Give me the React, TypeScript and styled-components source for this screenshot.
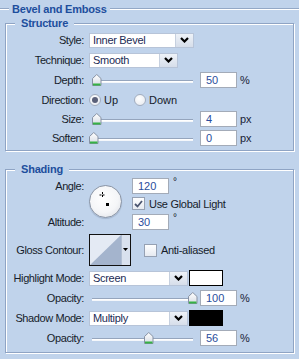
import * as React from 'react'
import styled, { createGlobalStyle } from 'styled-components'

const GlobalStyle = createGlobalStyle`
	html, body {
		margin: 0;
		padding: 0;
		background: #c0d3eb;
	}
	body {
		font-family: 'Liberation Sans', Arial, sans-serif;
		font-size: 11px;
		color: #161c2a;
	}
`

const Panel = styled.div`
	width: 299px;
	height: 359px;
	box-sizing: border-box;
	background: #c0d3eb;
	overflow: hidden;
`

const TitleRow = styled.div`
	display: flex;
	align-items: center;
	height: 17px;
`

const Rule = styled.div<{ $w?: number }>`
	height: 0;
	border-top: 1px solid #93a8c6;
	border-bottom: 1px solid #fff;
	flex: ${(p) => (p.$w ? `0 0 ${p.$w}px` : '1 1 0')};
`

const Title = styled.div`
	font-weight: bold;
	color: #1d4e9d;
	padding: 0 3px;
	letter-spacing: -0.2px;
	white-space: nowrap;
`

const Group = styled.div<{ $top: number; $bottom: number }>`
	margin: ${(p) => p.$top}px 5px 0 5px;
	border: 1px solid #8fa4c4;
	box-shadow: inset 1px 1px 0 #fff, 1px 1px 0 #fff;
	padding-bottom: ${(p) => p.$bottom}px;
`

const Legend = styled.div`
	margin: -7px 0 0 9px;
	width: fit-content;
	padding: 0 6px;
	background: #c0d3eb;
	font-weight: bold;
	color: #1d4e9d;
	line-height: 13px;
	letter-spacing: -0.2px;
`

const Row = styled.div<{ $h: number; $mt?: number }>`
	display: flex;
	align-items: center;
	height: ${(p) => p.$h}px;
	margin-top: ${(p) => p.$mt || 0}px;
`

const Label = styled.div`
	flex: 0 0 78px;
	margin-right: 5px;
	text-align: right;
	white-space: nowrap;
	letter-spacing: -0.4px;
`

const SelectBox = styled.div<{ $w: number }>`
	width: ${(p) => p.$w}px;
	height: 15px;
	box-sizing: border-box;
	display: flex;
	border: 1px solid #b7c4d8;
	background: #fff;
`

const SelectText = styled.div`
	flex: 1;
	padding-left: 3px;
	line-height: 13px;
	color: #1b2b55;
	letter-spacing: -0.3px;
	white-space: nowrap;
`

const SelectButton = styled.div`
	width: 17px;
	background: linear-gradient(#eef2f8, #d6deea);
	border-left: 1px solid #c6d0df;
	display: flex;
	align-items: center;
	justify-content: center;
`

const NumBox = styled.div`
	width: 37px;
	height: 16px;
	box-sizing: border-box;
	border: 1px solid #a3abb8;
	background: #fff;
	color: #2a4d9c;
	padding-left: 5px;
	line-height: 14px;
`

const Unit = styled.span`
	margin-left: 3px;
	color: #1a2235;
`

const Degree = styled.span`
	margin-left: 4px;
	align-self: flex-start;
	font-size: 10px;
	line-height: 10px;
	margin-top: 1px;
`

const SliderWrap = styled.div`
	position: relative;
	width: 108px;
	height: 14px;
	margin-right: 3px;
`

const Track = styled.div`
	position: absolute;
	left: 3px;
	right: 4px;
	top: 7px;
	height: 1px;
	background: #95a5bd;
	box-shadow: 0 1px 0 #fff, 0 2px 0 #f4f7fb;
`

const Thumb = styled.svg`
	position: absolute;
	top: 1px;
`

const RadioOption = styled.div<{ $mr?: number }>`
	display: flex;
	align-items: center;
	gap: 3px;
	margin-right: ${(p) => p.$mr || 0}px;
`

const RadioCircle = styled.span<{ $on?: boolean }>`
	width: 12px;
	height: 12px;
	box-sizing: border-box;
	border-radius: 50%;
	border: 1px solid #a2adbe;
	background: radial-gradient(circle at 40% 35%, #ffffff, #e3e7ee);
	display: inline-flex;
	align-items: center;
	justify-content: center;
	&::after {
		content: '';
		width: 6px;
		height: 6px;
		border-radius: 50%;
		background: ${(p) => (p.$on ? '#5a6079' : 'transparent')};
	}
`

const CheckOption = styled.div<{ $ml?: number }>`
	display: flex;
	align-items: center;
	gap: 4px;
	margin-left: ${(p) => p.$ml || 0}px;
	white-space: nowrap;
	letter-spacing: -0.3px;
`

const CheckBox = styled.span`
	width: 13px;
	height: 13px;
	box-sizing: border-box;
	border: 1px solid #96a1b3;
	background: linear-gradient(#ffffff, #e6eaf1);
	display: inline-flex;
	align-items: center;
	justify-content: center;
`

const AngleGrid = styled.div`
	display: grid;
	grid-template-columns: 83px 43px auto;
	grid-template-rows: 19px 17px 19px;
`

const GridLabel = styled(Label)<{ $row: number }>`
	grid-column: 1;
	grid-row: ${(p) => p.$row};
	align-self: center;
`

const GridCell = styled.div<{ $row: number }>`
	grid-column: 3;
	grid-row: ${(p) => p.$row};
	display: flex;
	align-items: center;
`

const Dial = styled.div`
	grid-column: 2;
	grid-row: 1 / 4;
	align-self: start;
	margin-top: 9px;
	width: 33px;
	height: 33px;
	box-sizing: border-box;
	border-radius: 50%;
	border: 1px solid #8a94a4;
	background: radial-gradient(circle at 45% 40%, #ffffff 0%, #f5f6f8 55%, #d8dce3 100%);
	box-shadow: 0 1px 1px rgba(40, 60, 90, 0.2);
`

const ContourBox = styled.div`
	width: 42px;
	height: 32px;
	box-sizing: border-box;
	border: 1px solid #111;
	background: #e4eaf4;
`

const Swatch = styled.div<{ $color: string }>`
	width: 34px;
	height: 16px;
	box-sizing: border-box;
	border: 1px solid #000;
	background: ${(p) => p.$color};
	margin-left: 1px;
`

const Chevron = () => (
	<svg width='9' height='6' viewBox='0 0 9 6'>
		<polyline points='1,1 4.5,4.5 8,1' fill='none' stroke='#000' strokeWidth='2.2' />
	</svg>
)

const Select = ({ value, width }: { value: string; width: number }) => (
	<SelectBox $w={width}>
		<SelectText>{value}</SelectText>
		<SelectButton>
			<Chevron />
		</SelectButton>
	</SelectBox>
)

const Slider = ({ pos }: { pos: number }) => (
	<SliderWrap>
		<Track />
		<Thumb width='10' height='12' viewBox='0 0 10 12' style={{ left: pos }}>
			<defs>
				<linearGradient id='thumbFill' x1='0' y1='0' x2='0' y2='1'>
					<stop offset='0' stopColor='#ffffff' />
					<stop offset='1' stopColor='#d7dce4' />
				</linearGradient>
			</defs>
			<polygon points='0.5,4.5 4.75,0.5 9,4.5 9,11.5 0.5,11.5' fill='url(#thumbFill)' stroke='#8792a4' />
			<rect x='1' y='9.5' width='7.5' height='2' fill='#35b245' />
		</Thumb>
	</SliderWrap>
)

const SliderRow = ({ label, pos, value, unit }: { label: string; pos: number; value: string; unit: string }) => (
	<>
		<Label>{label}</Label>
		<Slider pos={pos} />
		<NumBox>{value}</NumBox>
		<Unit>{unit}</Unit>
	</>
)

const App = () => {
	return (
		<Panel>
			<GlobalStyle />
			<TitleRow>
				<Rule $w={9} />
				<Title>Bevel and Emboss</Title>
				<Rule />
			</TitleRow>

			<Group $top={6} $bottom={3}>
				<Legend>Structure</Legend>
				<Row $h={20}>
					<Label>Style:</Label>
					<Select value='Inner Bevel' width={105} />
				</Row>
				<Row $h={20}>
					<Label>Technique:</Label>
					<Select value='Smooth' width={89} />
				</Row>
				<Row $h={20}>
					<SliderRow label='Depth:' pos={3} value='50' unit='%' />
				</Row>
				<Row $h={19}>
					<Label>Direction:</Label>
					<RadioOption $mr={16}>
						<RadioCircle $on />
						<span>Up</span>
					</RadioOption>
					<RadioOption>
						<RadioCircle />
						<span>Down</span>
					</RadioOption>
				</Row>
				<Row $h={19}>
					<SliderRow label='Size:' pos={3} value='4' unit='px' />
				</Row>
				<Row $h={19}>
					<SliderRow label='Soften:' pos={0} value='0' unit='px' />
				</Row>
			</Group>

			<Group $top={18} $bottom={4}>
				<Legend>Shading</Legend>
				<AngleGrid>
					<GridLabel $row={1}>Angle:</GridLabel>
					<GridLabel $row={3}>Altitude:</GridLabel>
					<Dial>
						<svg width='31' height='31' viewBox='0 0 31 31'>
							<line x1='9.5' y1='9' x2='15.5' y2='9' stroke='#000' strokeWidth='1' strokeDasharray='2 1' />
							<line x1='12.5' y1='6' x2='12.5' y2='12' stroke='#000' strokeWidth='1' strokeDasharray='2 1' />
							<rect x='16' y='17' width='3' height='3' fill='#000' />
						</svg>
					</Dial>
					<GridCell $row={1}>
						<NumBox>120</NumBox>
						<Degree>°</Degree>
					</GridCell>
					<GridCell $row={2}>
						<CheckOption>
							<CheckBox>
								<svg width='9' height='8' viewBox='0 0 9 8'>
									<polyline points='1,4 3.5,6.5 8,1' fill='none' stroke='#4b5570' strokeWidth='1.8' />
								</svg>
							</CheckBox>
							<span>Use Global Light</span>
						</CheckOption>
					</GridCell>
					<GridCell $row={3}>
						<NumBox>30</NumBox>
						<Degree>°</Degree>
					</GridCell>
				</AngleGrid>

				<Row $h={32} $mt={3}>
					<Label>Gloss Contour:</Label>
					<ContourBox>
						<svg width='40' height='30' viewBox='0 0 40 30'>
							<polygon points='0,30 31,0 31,30' fill='#a4b4cd' />
							<rect x='31' y='0' width='9' height='30' fill='#d9e1ee' />
							<line x1='31.5' y1='0' x2='31.5' y2='30' stroke='#b3c0d4' />
							<polygon points='33,13 38,13 35.5,16' fill='#000' />
						</svg>
					</ContourBox>
					<CheckOption $ml={13}>
						<CheckBox />
						<span>Anti-aliased</span>
					</CheckOption>
				</Row>

				<Row $h={20} $mt={2}>
					<Label>Highlight Mode:</Label>
					<Select value='Screen' width={99} />
					<Swatch $color='#ffffff' />
				</Row>
				<Row $h={20}>
					<SliderRow label='Opacity:' pos={99} value='100' unit='%' />
				</Row>
				<Row $h={20}>
					<Label>Shadow Mode:</Label>
					<Select value='Multiply' width={99} />
					<Swatch $color='#000000' />
				</Row>
				<Row $h={20}>
					<SliderRow label='Opacity:' pos={55} value='56' unit='%' />
				</Row>
			</Group>
		</Panel>
	)
}

export default App
